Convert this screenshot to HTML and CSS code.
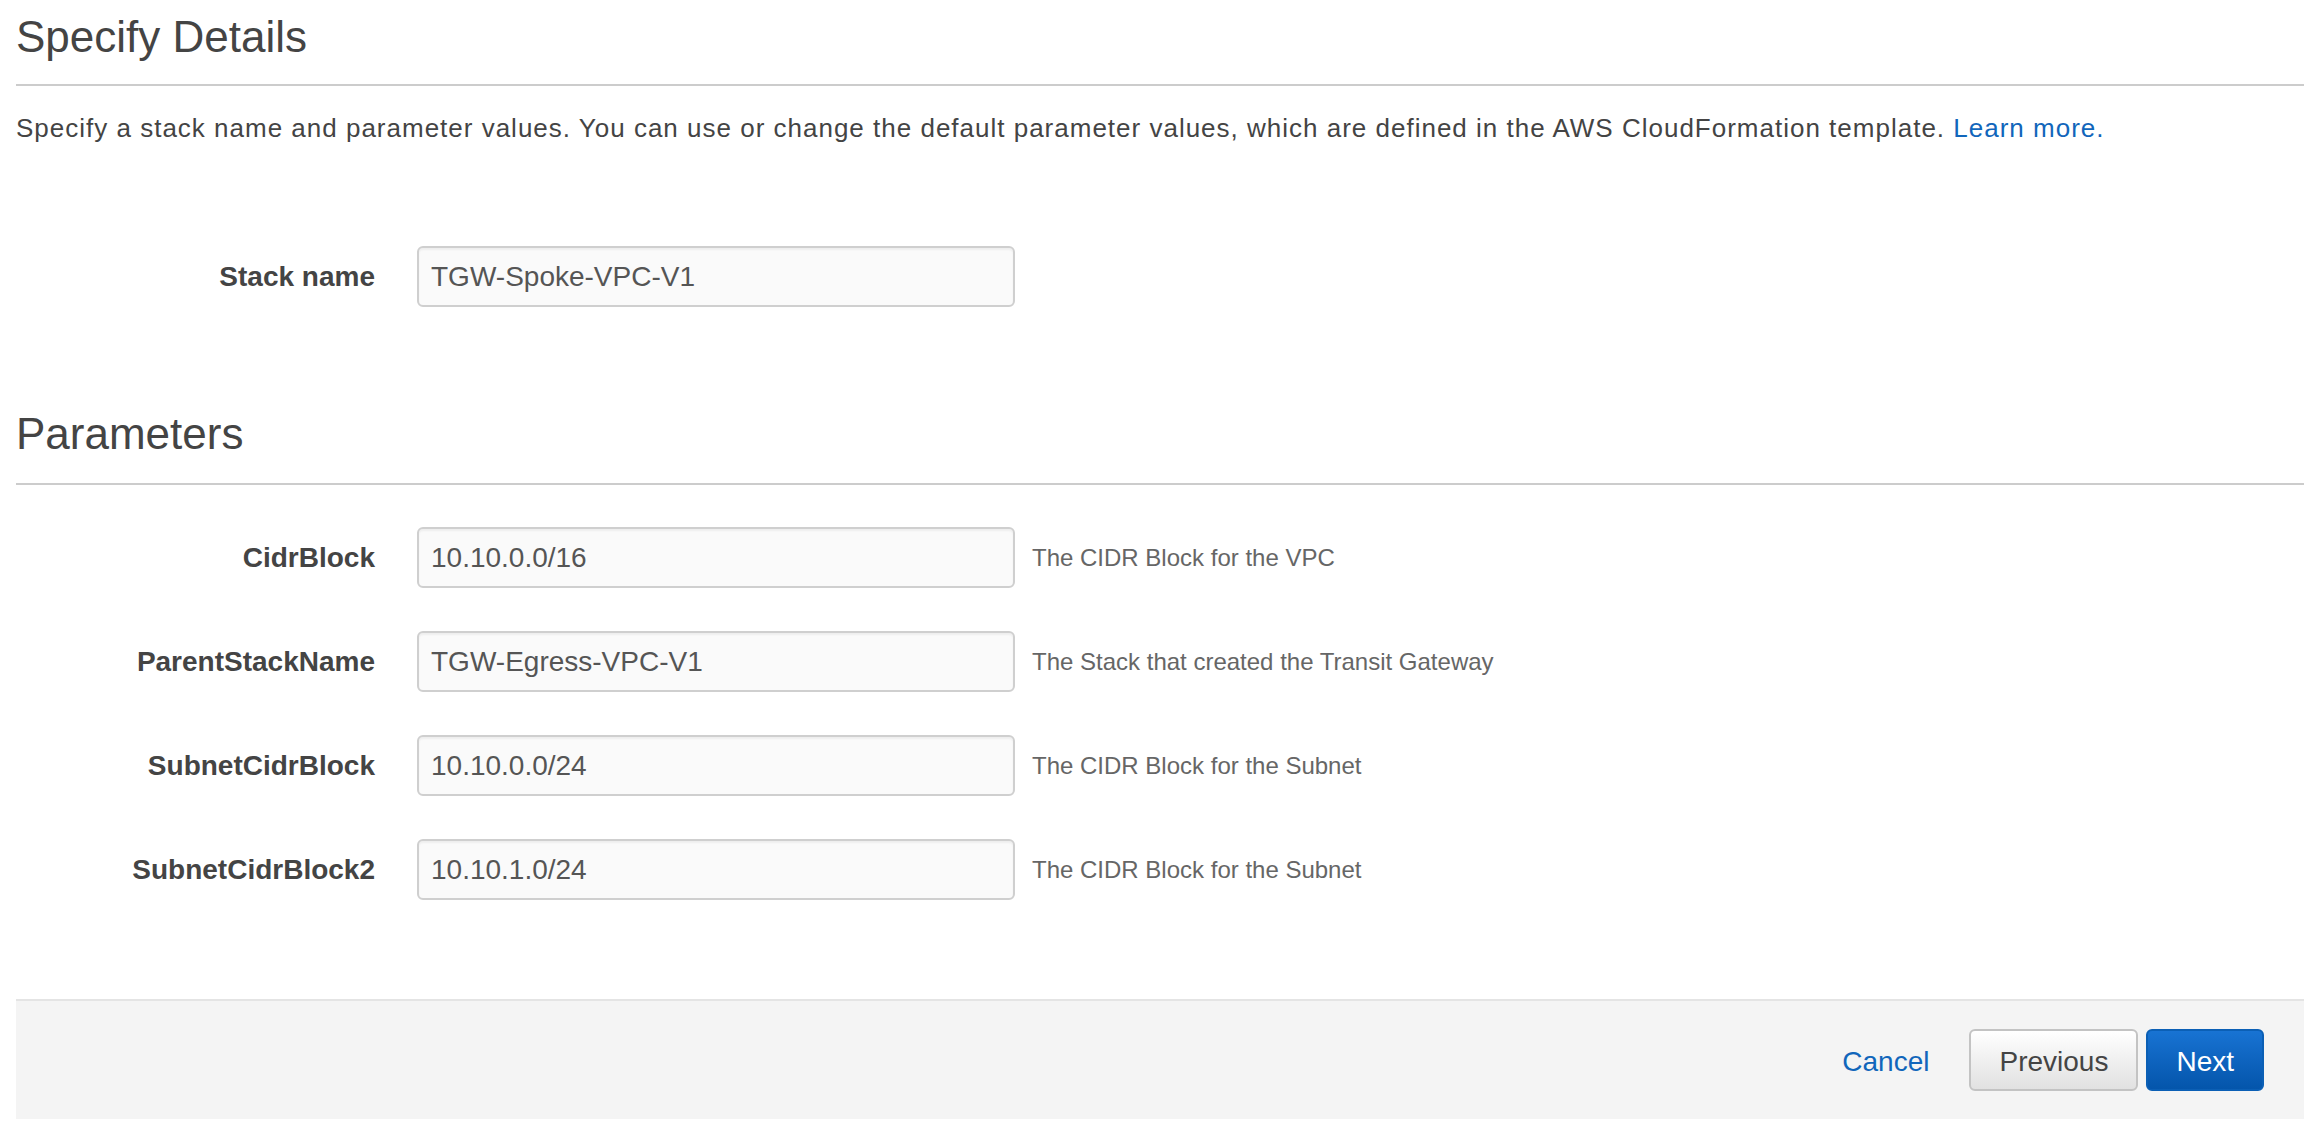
FILE: index.html
```html
<!DOCTYPE html>
<html lang="en">
<head>
<meta charset="utf-8">
<title>Specify Details</title>
<link rel="stylesheet" href="styles.css">
</head>
<body>
<div class="page">
  <h1 class="section-title">Specify Details</h1>
  <p class="intro">Specify a stack name and parameter values. You can use or change the default parameter values, which are defined in the AWS CloudFormation template. <a class="link" href="#">Learn more.</a></p>

  <div class="form-row stack-row">
    <label class="field-label">Stack name</label>
    <input class="field-input" type="text" value="TGW-Spoke-VPC-V1">
  </div>

  <h2 class="section-title params-title">Parameters</h2>

  <div class="params">
    <div class="form-row">
      <label class="field-label">CidrBlock</label>
      <input class="field-input" type="text" value="10.10.0.0/16">
      <span class="field-help">The CIDR Block for the VPC</span>
    </div>
    <div class="form-row">
      <label class="field-label">ParentStackName</label>
      <input class="field-input" type="text" value="TGW-Egress-VPC-V1">
      <span class="field-help">The Stack that created the Transit Gateway</span>
    </div>
    <div class="form-row">
      <label class="field-label">SubnetCidrBlock</label>
      <input class="field-input" type="text" value="10.10.0.0/24">
      <span class="field-help">The CIDR Block for the Subnet</span>
    </div>
    <div class="form-row">
      <label class="field-label">SubnetCidrBlock2</label>
      <input class="field-input" type="text" value="10.10.1.0/24">
      <span class="field-help">The CIDR Block for the Subnet</span>
    </div>
  </div>

  <div class="footer">
    <a class="cancel" href="#">Cancel</a>
    <button class="btn btn-secondary" type="button">Previous</button>
    <button class="btn btn-primary" type="button">Next</button>
  </div>
</div>
</body>
</html>
```

FILE: styles.css
```css
html, body {
  margin: 0;
  padding: 0;
  background: #ffffff;
}

body {
  font-family: "Liberation Sans", Arial, Helvetica, sans-serif;
  color: #444444;
}

.page {
  padding: 0 14px 0 16px;
}

.section-title {
  margin: 12px 0 0;
  font-size: 44px;
  line-height: 50px;
  font-weight: normal;
  color: #444444;
  padding-bottom: 22px;
  border-bottom: 2px solid #cccccc;
}

.params-title {
  margin-top: 102px;
  padding-bottom: 24px;
}

.intro {
  margin: 24px 0 0;
  font-size: 26px;
  line-height: 36px;
  letter-spacing: 1px;
  color: #444444;
}

.link {
  color: #1166bb;
  text-decoration: none;
}

.stack-row {
  margin-top: 100px;
}

.params {
  display: flex;
  flex-direction: column;
  gap: 43px;
  margin-top: 42px;
}

.form-row {
  display: flex;
  align-items: center;
}

.field-label {
  width: 359px;
  margin-right: 42px;
  text-align: right;
  font-size: 28px;
  font-weight: bold;
  color: #444444;
  flex-shrink: 0;
}

.field-input {
  box-sizing: border-box;
  width: 598px;
  height: 61px;
  margin: 0;
  padding: 0 12px;
  border: 2px solid #cfcfcf;
  border-radius: 6px;
  background: #fafafa;
  box-shadow: inset 0 2px 2px rgba(0, 0, 0, 0.05);
  font-family: "Liberation Sans", Arial, Helvetica, sans-serif;
  font-size: 28px;
  color: #555555;
  flex-shrink: 0;
}

.field-help {
  margin-left: 17px;
  font-size: 24px;
  color: #666666;
}

.footer {
  margin-top: 99px;
  border-top: 2px solid #e4e4e4;
  background: #f4f4f4;
  padding: 28px 40px;
  display: flex;
  justify-content: flex-end;
  align-items: center;
}

.cancel {
  font-size: 28px;
  color: #1166bb;
  text-decoration: none;
  margin-right: 40px;
  padding-top: 3px;
}

.btn {
  box-sizing: border-box;
  height: 62px;
  padding: 3px 28px 0;
  border-radius: 6px;
  font-family: "Liberation Sans", Arial, Helvetica, sans-serif;
  font-size: 28px;
  cursor: pointer;
}

.btn-secondary {
  border: 2px solid #c3c3c3;
  background: linear-gradient(#ffffff, #e1e1e1);
  color: #444444;
}

.btn-primary {
  margin-left: 8px;
  border: 2px solid #0b5fb5;
  background: linear-gradient(#1873d3, #0455ab);
  color: #ffffff;
}
```
